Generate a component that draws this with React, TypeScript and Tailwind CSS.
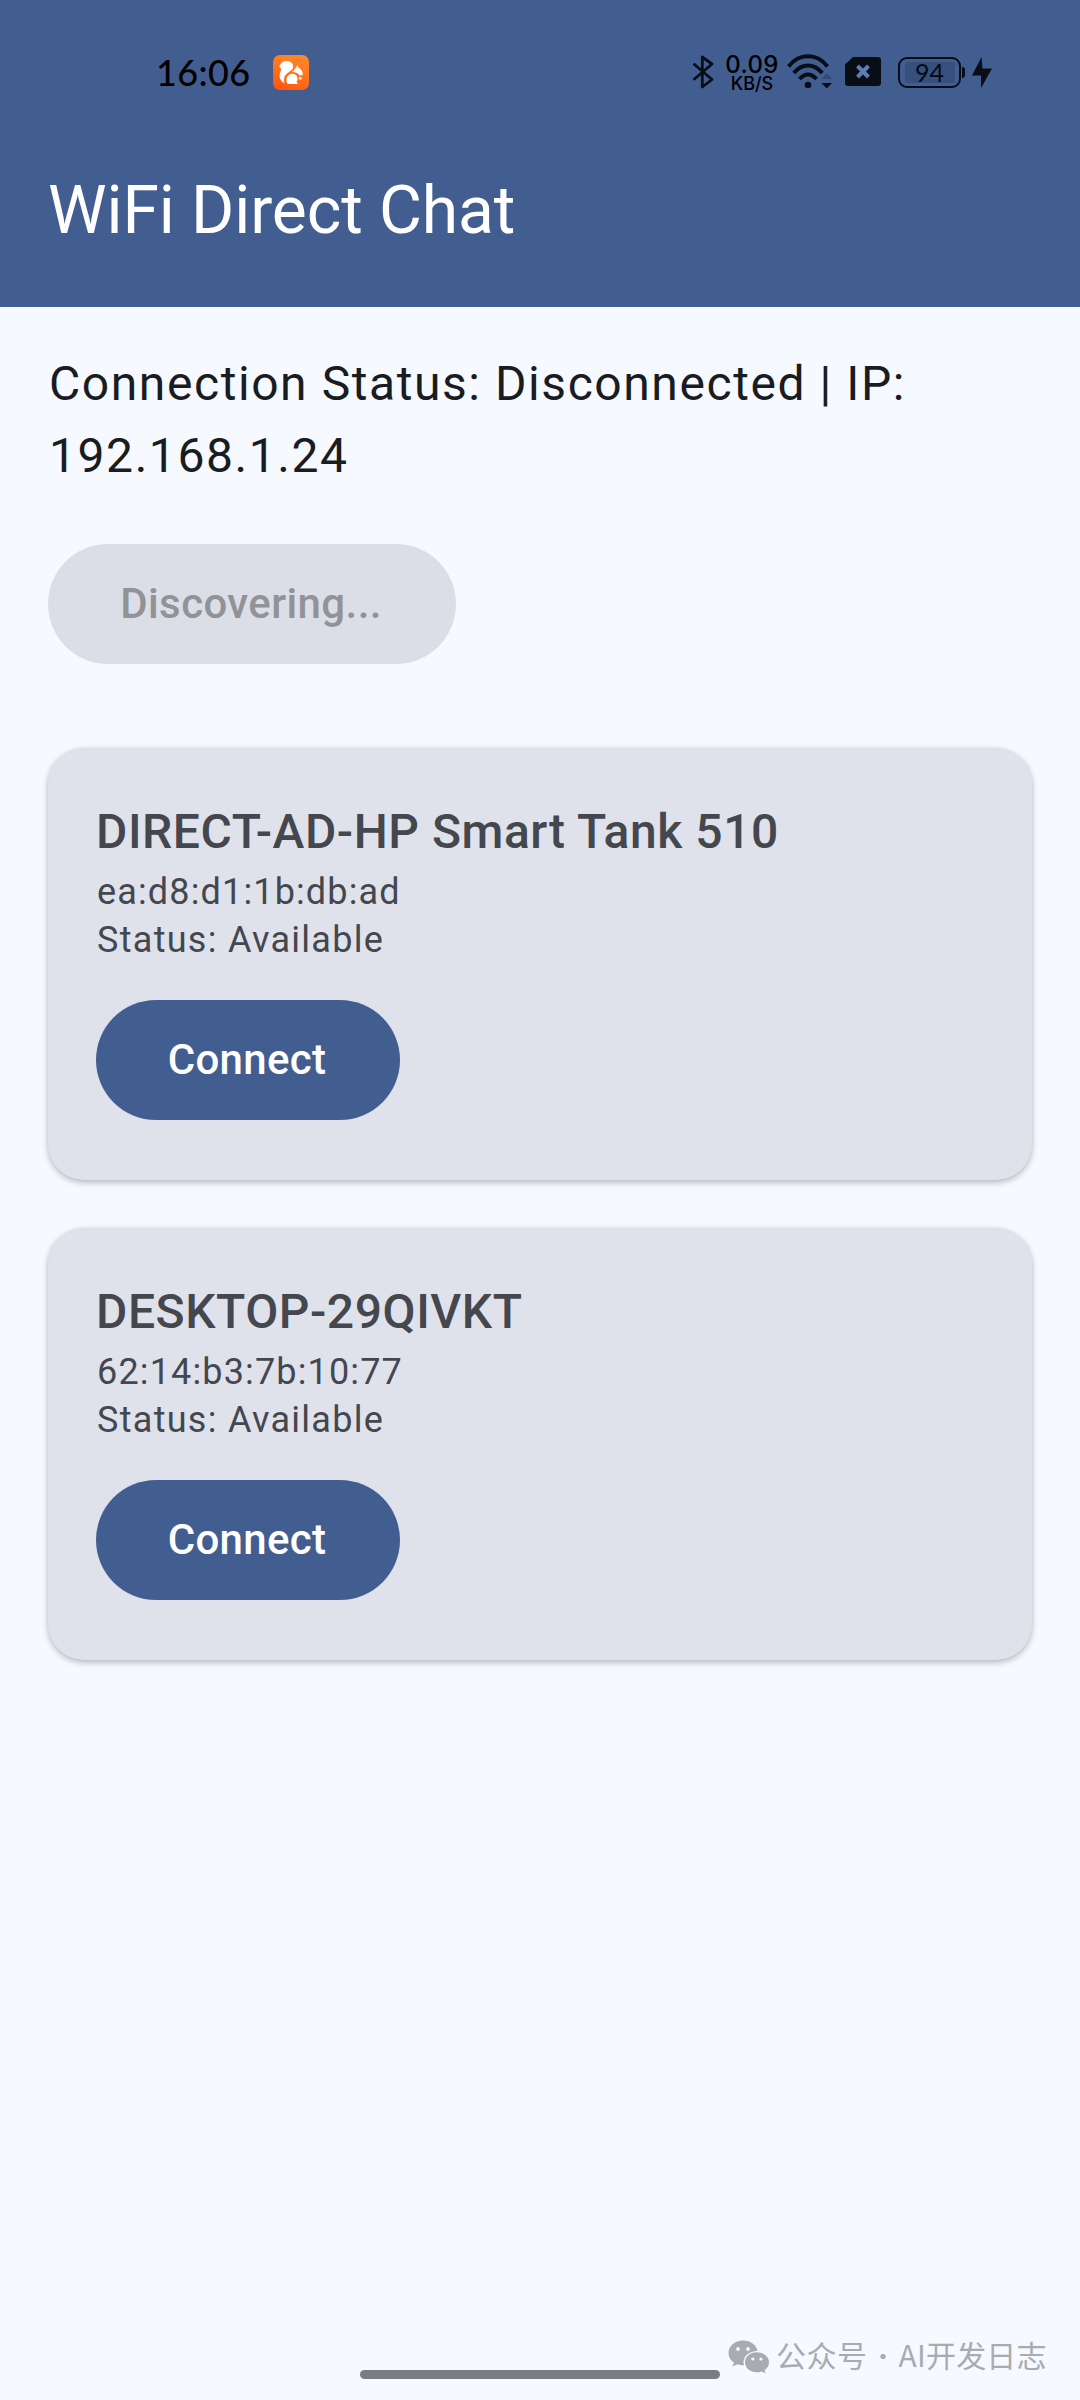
import { ReactNode } from 'react';

const peers = [
  { name: 'DIRECT-AD-HP Smart Tank 510', address: 'ea:d8:d1:1b:db:ad', status: 'Available' },
  { name: 'DESKTOP-29QIVKT', address: '62:14:b3:7b:10:77', status: 'Available' },
];

function BrowserLogo() {
  return (
    <svg className="w-9 h-[35px]" viewBox="0 0 36 35">
      <defs>
        <linearGradient id="logo" x1="0.8" y1="0" x2="0.4" y2="1">
          <stop offset="0" stopColor="#ff8a2a" />
          <stop offset="0.5" stopColor="#ff7420" />
          <stop offset="1" stopColor="#ff5a10" />
        </linearGradient>
      </defs>
      <rect width="36" height="35" rx="7" fill="url(#logo)" />
      <path
        fill="#fff"
        d="M11.5 28.5C7.5 26 6 22.5 6.8 18.8C7.2 16.8 8.4 15.5 8 14C7.6 12.8 6.4 12.2 6.4 11.6C7.3 8 10.5 6 13.8 6C17.5 6 20 8.4 20.2 11.4C20.3 13.5 18.6 15.2 16.6 16.6C13.8 18.6 11.6 20.2 11.2 23C11 25 11 27 11.5 28.5Z"
      />
      <path
        fill="#fff"
        d="M14.6 29C12.2 25 13.6 20.4 17.6 19C21.2 18 24.2 20 24.6 23.2C24.8 25 24.2 26 23.4 26.8L25 29Z"
      />
      <path
        fill="#fff"
        d="M18.6 17.2C20.8 15.6 22.6 13.4 24.6 10L25.4 12.6C28 14 30 16.8 29.8 20L26.6 20.6C24.8 18 22.2 16.8 18.6 17.2Z"
      />
      <rect x="26" y="22" width="2.5" height="2.5" rx="0.6" fill="#fff" />
    </svg>
  );
}

function StatusBar() {
  return (
    <div className="flex h-36 text-black">
      <div className="ml-[156px] mt-[49px] w-[100px] h-[46px] leading-[46px] text-[36px] tracking-[0.4px] font-medium font-['Lato',sans-serif]">
        16:06
      </div>
      <div className="ml-[17px] mt-[55px]">
        <BrowserLogo />
      </div>
      <svg className="ml-[384px] mt-[55px] w-[21px] h-[34px]" viewBox="0 0 21 34" fill="none" stroke="#080d16" strokeWidth="2.8" strokeLinejoin="round" strokeLinecap="round">
        <path d="M1.5 9.5L19 24.5L9.3 32V2L19 9L1.5 24" />
      </svg>
      <div className="ml-[9px] mt-[54px] w-[58px] text-center font-medium font-['Inter',sans-serif]">
        <div className="text-[24px] leading-[22px] tracking-[0.3px]">0.09</div>
        <div className="text-[18px] leading-[16px]">KB/S</div>
      </div>
      <svg className="ml-[6px] mt-[54px] w-[46px] h-[36px]" viewBox="0 0 46 36" fill="none" stroke="#080d16" strokeWidth="4">
        <path d="M1.5 12.5C12 -1.2 30 -1.2 40.5 12.5" />
        <path d="M6.8 19C15 9 27 9 35.2 19" />
        <path d="M12.5 25C18 19 24 19 29.5 25" />
        <circle cx="21" cy="31" r="3.3" fill="#080d16" stroke="none" />
        <path d="M34.5 25L39.8 19.5L45 25Z" fill="#33497b" stroke="none" />
        <path d="M34.5 29L39.8 34.5L45 29Z" fill="#080d16" stroke="none" />
      </svg>
      <svg className="ml-[12px] mt-[57px] w-9 h-[29px]" viewBox="0 0 36 29">
        <path d="M8 0H33Q36 0 36 3V26Q36 29 33 29H3Q0 29 0 26V7.5Z" fill="#080d16" />
        <path d="M12.5 9L23.5 20M23.5 9L12.5 20" stroke="#5f7cb3" strokeWidth="4" />
      </svg>
      <div className="relative ml-[17px] mt-[57px] flex w-[63px] h-[31px] items-center justify-center rounded-[9px] border-2 border-[#080d16]">
        <div className="flex w-[50px] h-[21px] items-center justify-center rounded-[3px] bg-[#374f7c] text-[25px] leading-none text-[#050a12] font-['Lato',sans-serif]">
          94
        </div>
        <div className="absolute -right-[6px] top-[8px] w-[3px] h-[11px] rounded-r-sm bg-[#080d16]" />
      </div>
      <svg className="ml-[11px] mt-[57px] w-5 h-[31px]" viewBox="0 0 20 31">
        <path d="M9.5 0L0 18.5H9V31L20 11.5H10.5Z" fill="#080d16" />
      </svg>
    </div>
  );
}

function Button({ children, disabled = false }: { children: ReactNode; disabled?: boolean }) {
  return (
    <button
      disabled={disabled}
      className={`flex h-[120px] items-center justify-center rounded-full pr-[2px] text-[42px] leading-[60px] font-medium ${
        disabled
          ? 'w-[408px] bg-[#dbdee6] tracking-[0.4px] text-[#919397]'
          : 'w-[304px] bg-[#425e91] tracking-[0.3px] text-white'
      }`}
    >
      {children}
    </button>
  );
}

export default function App() {
  return (
    <div className="relative flex flex-col w-[1080px] h-[2400px] overflow-hidden bg-[#f6f9ff] font-['Roboto',sans-serif]">
      {/* Top app bar */}
      <header className="h-[307px] shrink-0 bg-[#425e91]">
        <StatusBar />
        <h1 className="px-12 pt-[25px] text-[66px] leading-[84px] tracking-[-0.1px] text-white">WiFi Direct Chat</h1>
      </header>

      <main className="px-12 pt-[41px]">
        <p className="h-[196px] pl-px text-[48px] leading-[72px] tracking-[1.57px] text-[#191c20]">
          Connection Status: Disconnected | IP: 192.168.1.24
        </p>
        <Button disabled>Discovering...</Button>

        {/* Peer list */}
        <div className="mt-[84px] flex flex-col gap-12">
          {peers.map((peer) => (
            <div
              key={peer.address}
              className="h-[432px] rounded-[36px] bg-[#e0e2eb] px-12 pt-12 text-[#44474e] shadow-[0_3px_6px_rgba(0,0,0,0.22),0_0_4px_rgba(0,0,0,0.08)]"
            >
              <h2 className="text-[48px] leading-[72px] font-medium tracking-[0.55px]">{peer.name}</h2>
              <p className="pl-px text-[36px] leading-[48px] tracking-[1.15px]">{peer.address}</p>
              <p className="mb-[36px] pl-px text-[36px] leading-[48px] tracking-[1.3px]">Status: {peer.status}</p>
              <Button>Connect</Button>
            </div>
          ))}
        </div>
      </main>

      {/* Gesture bar */}
      <div className="absolute left-[360px] top-[2370px] w-[360px] h-[9px] rounded-full bg-[#7b7c80]" />

      {/* Watermark */}
      <div className="absolute left-[728px] top-[2333px] flex h-[44px] items-center text-[#a9abb0]">
        <svg className="mt-[3px] w-[42px] h-[34px]" viewBox="0 0 42 34" fill="#a9abb0">
          <path d="M15 0.5C6.8 0.5 0.5 6 0.5 13C0.5 17 2.5 20.4 6 22.7L4.5 26.5L9.5 24.3C11.5 25 13.5 25.3 16 25.2C13.8 17.5 20 11 29.5 11C28.5 5 22.5 0.5 15 0.5Z" />
          <path d="M28.8 12.3C22 12.3 17 16.8 17 22.3C17 28 22 32.3 28.8 32.3C30.5 32.3 32.2 32 33.6 31.4L37.6 33.5L36.6 30.2C39.5 28.2 41 25.5 41 22.3C41 16.8 35.6 12.3 28.8 12.3Z" />
          <circle cx="10" cy="9" r="1.9" fill="#f6f9ff" />
          <circle cx="20" cy="9" r="1.9" fill="#f6f9ff" />
          <circle cx="24.8" cy="19" r="1.6" fill="#f6f9ff" />
          <circle cx="33" cy="19" r="1.6" fill="#f6f9ff" />
        </svg>
        <div className="ml-[6px] flex text-[30px] leading-[44px] font-['Noto_Sans_CJK_SC',sans-serif]">
          <span className="tracking-[0.5px]">公众号</span>
          <span className="mt-[2px] w-[31px] text-center font-bold font-['Noto_Sans',sans-serif]">·</span>
          <span className="tracking-[0.2px]">AI开发日志</span>
        </div>
      </div>
    </div>
  );
}
